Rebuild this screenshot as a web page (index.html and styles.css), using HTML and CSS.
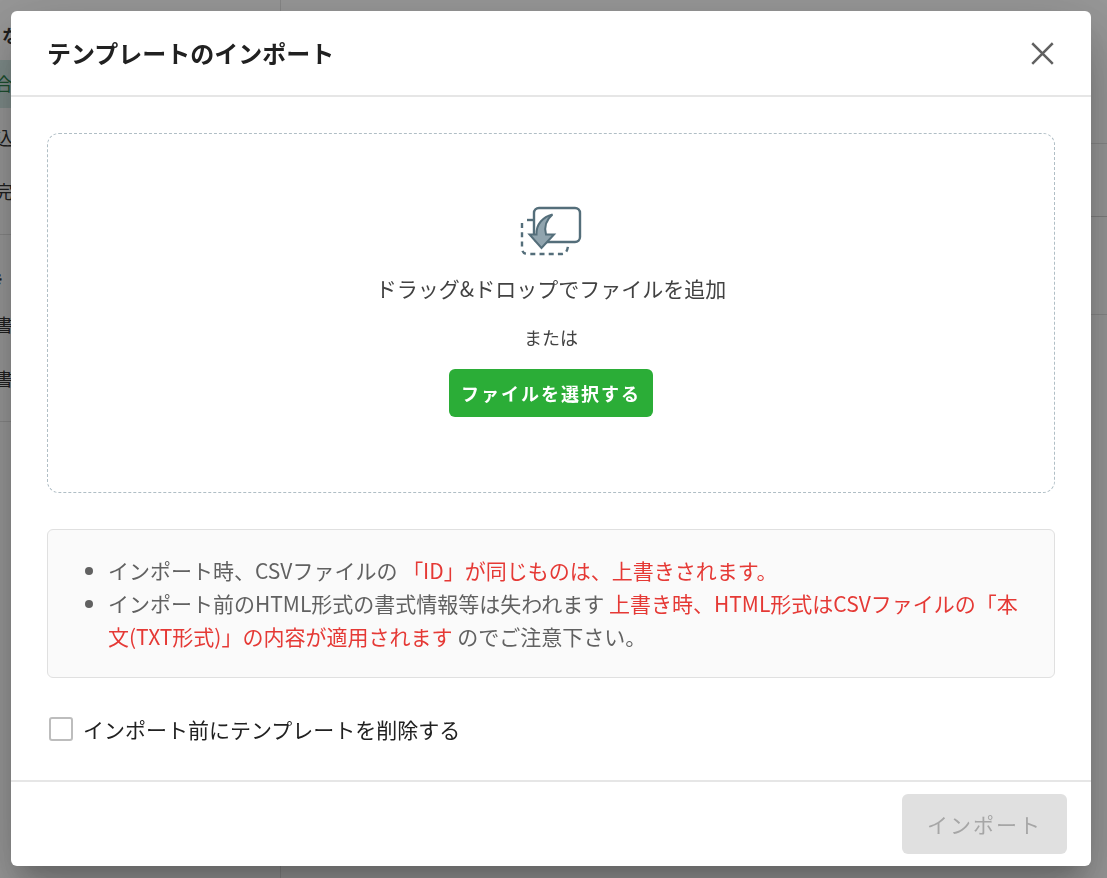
FILE: index.html
```html
<!DOCTYPE html>
<html lang="ja">
<head>
    <meta charset="UTF-8">
    <meta name="viewport" content="width=device-width, initial-scale=1.0">
    <title>テンプレートのインポート</title>
    <link rel="stylesheet" href="styles.css">
</head>
<body>
    <div class="page">
        <nav class="sidebar">
            <div class="nav-group">
                <h2 class="nav-title">な</h2>
                <a href="#" class="nav-item active">合</a>
                <a href="#" class="nav-item">込</a>
                <a href="#" class="nav-item">完</a>
            </div>
            <div class="nav-group">
                <h2 class="nav-title nav-title-end">き</h2>
                <a href="#" class="nav-item">書</a>
                <a href="#" class="nav-item">書</a>
            </div>
        </nav>
        <main class="content">
            <div class="content-head"></div>
            <div class="content-filter"></div>
            <div class="content-row"></div>
        </main>
    </div>

    <div class="overlay">
        <div class="modal" role="dialog" aria-modal="true" aria-labelledby="modalTitle">
            <header class="modal-header">
                <h1 id="modalTitle">テンプレートのインポート</h1>
                <button type="button" class="btn-close" aria-label="閉じる">
                    <svg class="close-icon" viewBox="0 0 24 24" fill="none" stroke="currentColor">
                        <path d="M3 3l18 18M21 3L3 21" stroke-width="2.4" stroke-linecap="square"/>
                    </svg>
                </button>
            </header>

            <div class="modal-body">
                <div class="upload-area">
                    <svg class="upload-icon" viewBox="0 0 64 52" fill="none" stroke="#546e7a">
                        <rect x="15" y="3" width="46" height="34" rx="5" stroke-width="2.4"/>
                        <path d="M14 15H8" stroke-width="2.4"/>
                        <path d="M3 18v25q0 6 6 6h34q5 0 6-8" stroke-width="2.4" stroke-dasharray="5 4.2"/>
                        <path d="M33.500 9.500C24 12 17 19 17.500 29.500H10.500L22.500 43 35 29.500H27C25 22 27 15 33.500 9.500z" fill="#90a4ae" stroke-width="2"/>
                    </svg>
                    <p class="upload-text">ドラッグ&amp;ドロップでファイルを追加</p>
                    <p class="upload-subtext">または</p>
                    <button type="button" class="btn btn-select">ファイルを選択する</button>
                </div>

                <ul class="notes">
                    <li>インポート時、CSVファイルの <span class="warn">「ID」が同じものは、上書きされます。</span></li>
                    <li>インポート前のHTML形式の書式情報等は失われます <span class="warn">上書き時、HTML形式はCSVファイルの「本文(TXT形式)」の内容が適用されます</span> のでご注意下さい。</li>
                </ul>

                <label class="check" for="deleteBefore">
                    <input type="checkbox" id="deleteBefore">
                    <span>インポート前にテンプレートを削除する</span>
                </label>
            </div>

            <footer class="modal-footer">
                <button type="submit" class="btn btn-import" disabled>インポート</button>
            </footer>
        </div>
    </div>
</body>
</html>
```
FILE: styles.css
```css
* {
    margin: 0;
    padding: 0;
    box-sizing: border-box;
}

body {
    font-family: 'Noto Sans CJK JP', 'Noto Sans', sans-serif;
    background: white;
    color: #212121;
    overflow: hidden;
}

button {
    font-family: inherit;
    border: none;
    cursor: pointer;
}

/* Page behind the dialog */
.page {
    display: flex;
    min-height: 100vh;
}

.sidebar {
    width: 281px;
    border-right: 1px solid #e0e0e0;
    overflow: hidden;
}

.nav-group {
    padding: 12px 0;
    border-bottom: 1px solid #e0e0e0;
}

.nav-title {
    height: 48px;
    padding-left: 2px;
    font-size: 18px;
    line-height: 46px;
}

.nav-title-end {
    height: 54px;
    margin-left: -16px;
    line-height: 66px;
}

.nav-item {
    display: block;
    height: 48px;
    margin: 0 0 6px -5px;
    font-size: 18px;
    line-height: 46px;
    color: inherit;
    text-decoration: none;
}

.nav-item.active {
    background: #d0e8e4;
    color: #1b7a3d;
}

.content {
    flex: 1;
}

.content-head {
    height: 144px;
    border-bottom: 1px solid #e0e0e0;
}

.content-filter {
    height: 73px;
    border-bottom: 1px solid #d0d0d0;
}

.content-row {
    height: 98px;
    border-bottom: 1px solid #e0e0e0;
}

/* Dialog */
.overlay {
    position: fixed;
    inset: 0;
    padding: 11px 16px 12px 11px;
    background: rgba(33, 33, 33, 0.46);
}

.modal {
    display: flex;
    flex-direction: column;
    height: 100%;
    background: white;
    border-radius: 6px;
    box-shadow: 0 16px 22px -10px rgba(0,0,0,0.2), 0 36px 57px 4px rgba(0,0,0,0.14), 0 14px 69px 12px rgba(0,0,0,0.12);
}

.modal-header {
    display: flex;
    flex-shrink: 0;
    align-items: center;
    justify-content: space-between;
    height: 86px;
    padding: 0 36px;
    border-bottom: 2px solid #e6e6e6;
}

h1 {
    font-size: 24px;
    line-height: 36px;
    font-weight: 700;
}

.btn-close {
    display: flex;
    background: none;
    color: #616161;
}

.close-icon {
    width: 25px;
    height: 25px;
}

.modal-body {
    flex: 1;
    padding: 36px 36px 34px;
}

.upload-area {
    display: flex;
    flex-direction: column;
    align-items: center;
    justify-content: center;
    height: 360px;
    padding-bottom: 4px;
    border: 1px dashed #b0bec5;
    border-radius: 12px;
}

.upload-icon {
    width: 64px;
    height: 52px;
    margin-bottom: 16px;
}

.upload-text {
    font-size: 21px;
    line-height: 30px;
    color: #424242;
    margin-bottom: 20px;
}

.upload-subtext {
    font-size: 18px;
    line-height: 28px;
    color: #424242;
    margin-bottom: 18px;
}

.btn {
    border-radius: 6px;
    letter-spacing: 2px;
}

.btn-select {
    height: 48px;
    padding: 0 12px;
    font-size: 18px;
    font-weight: 600;
    background: #2bad37;
    color: white;
}

.notes {
    margin-top: 36px;
    padding: 24px 24px 24px 60px;
    background: #fafafa;
    border: 1px solid #e0e0e0;
    border-radius: 6px;
    font-size: 21px;
    line-height: 33px;
    color: #616161;
}

.warn {
    color: #e53935;
}

.check {
    display: flex;
    align-items: center;
    gap: 10px;
    margin-top: 36px;
    padding-left: 2px;
    font-size: 21px;
    line-height: 30px;
}

.check input {
    appearance: none;
    width: 24px;
    height: 24px;
    border: 2px solid #bdbdbd;
    border-radius: 3px;
    background: white;
}

.check input:checked {
    background: #2bad37;
    border-color: #2bad37;
}

.modal-footer {
    display: flex;
    justify-content: flex-end;
    padding: 12px 24px;
    border-top: 2px solid #e6e6e6;
}

.btn-import {
    height: 60px;
    padding: 0 25px;
    font-size: 21px;
    background: #e0e0e0;
    color: #a6a6a6;
    cursor: default;
}
```
